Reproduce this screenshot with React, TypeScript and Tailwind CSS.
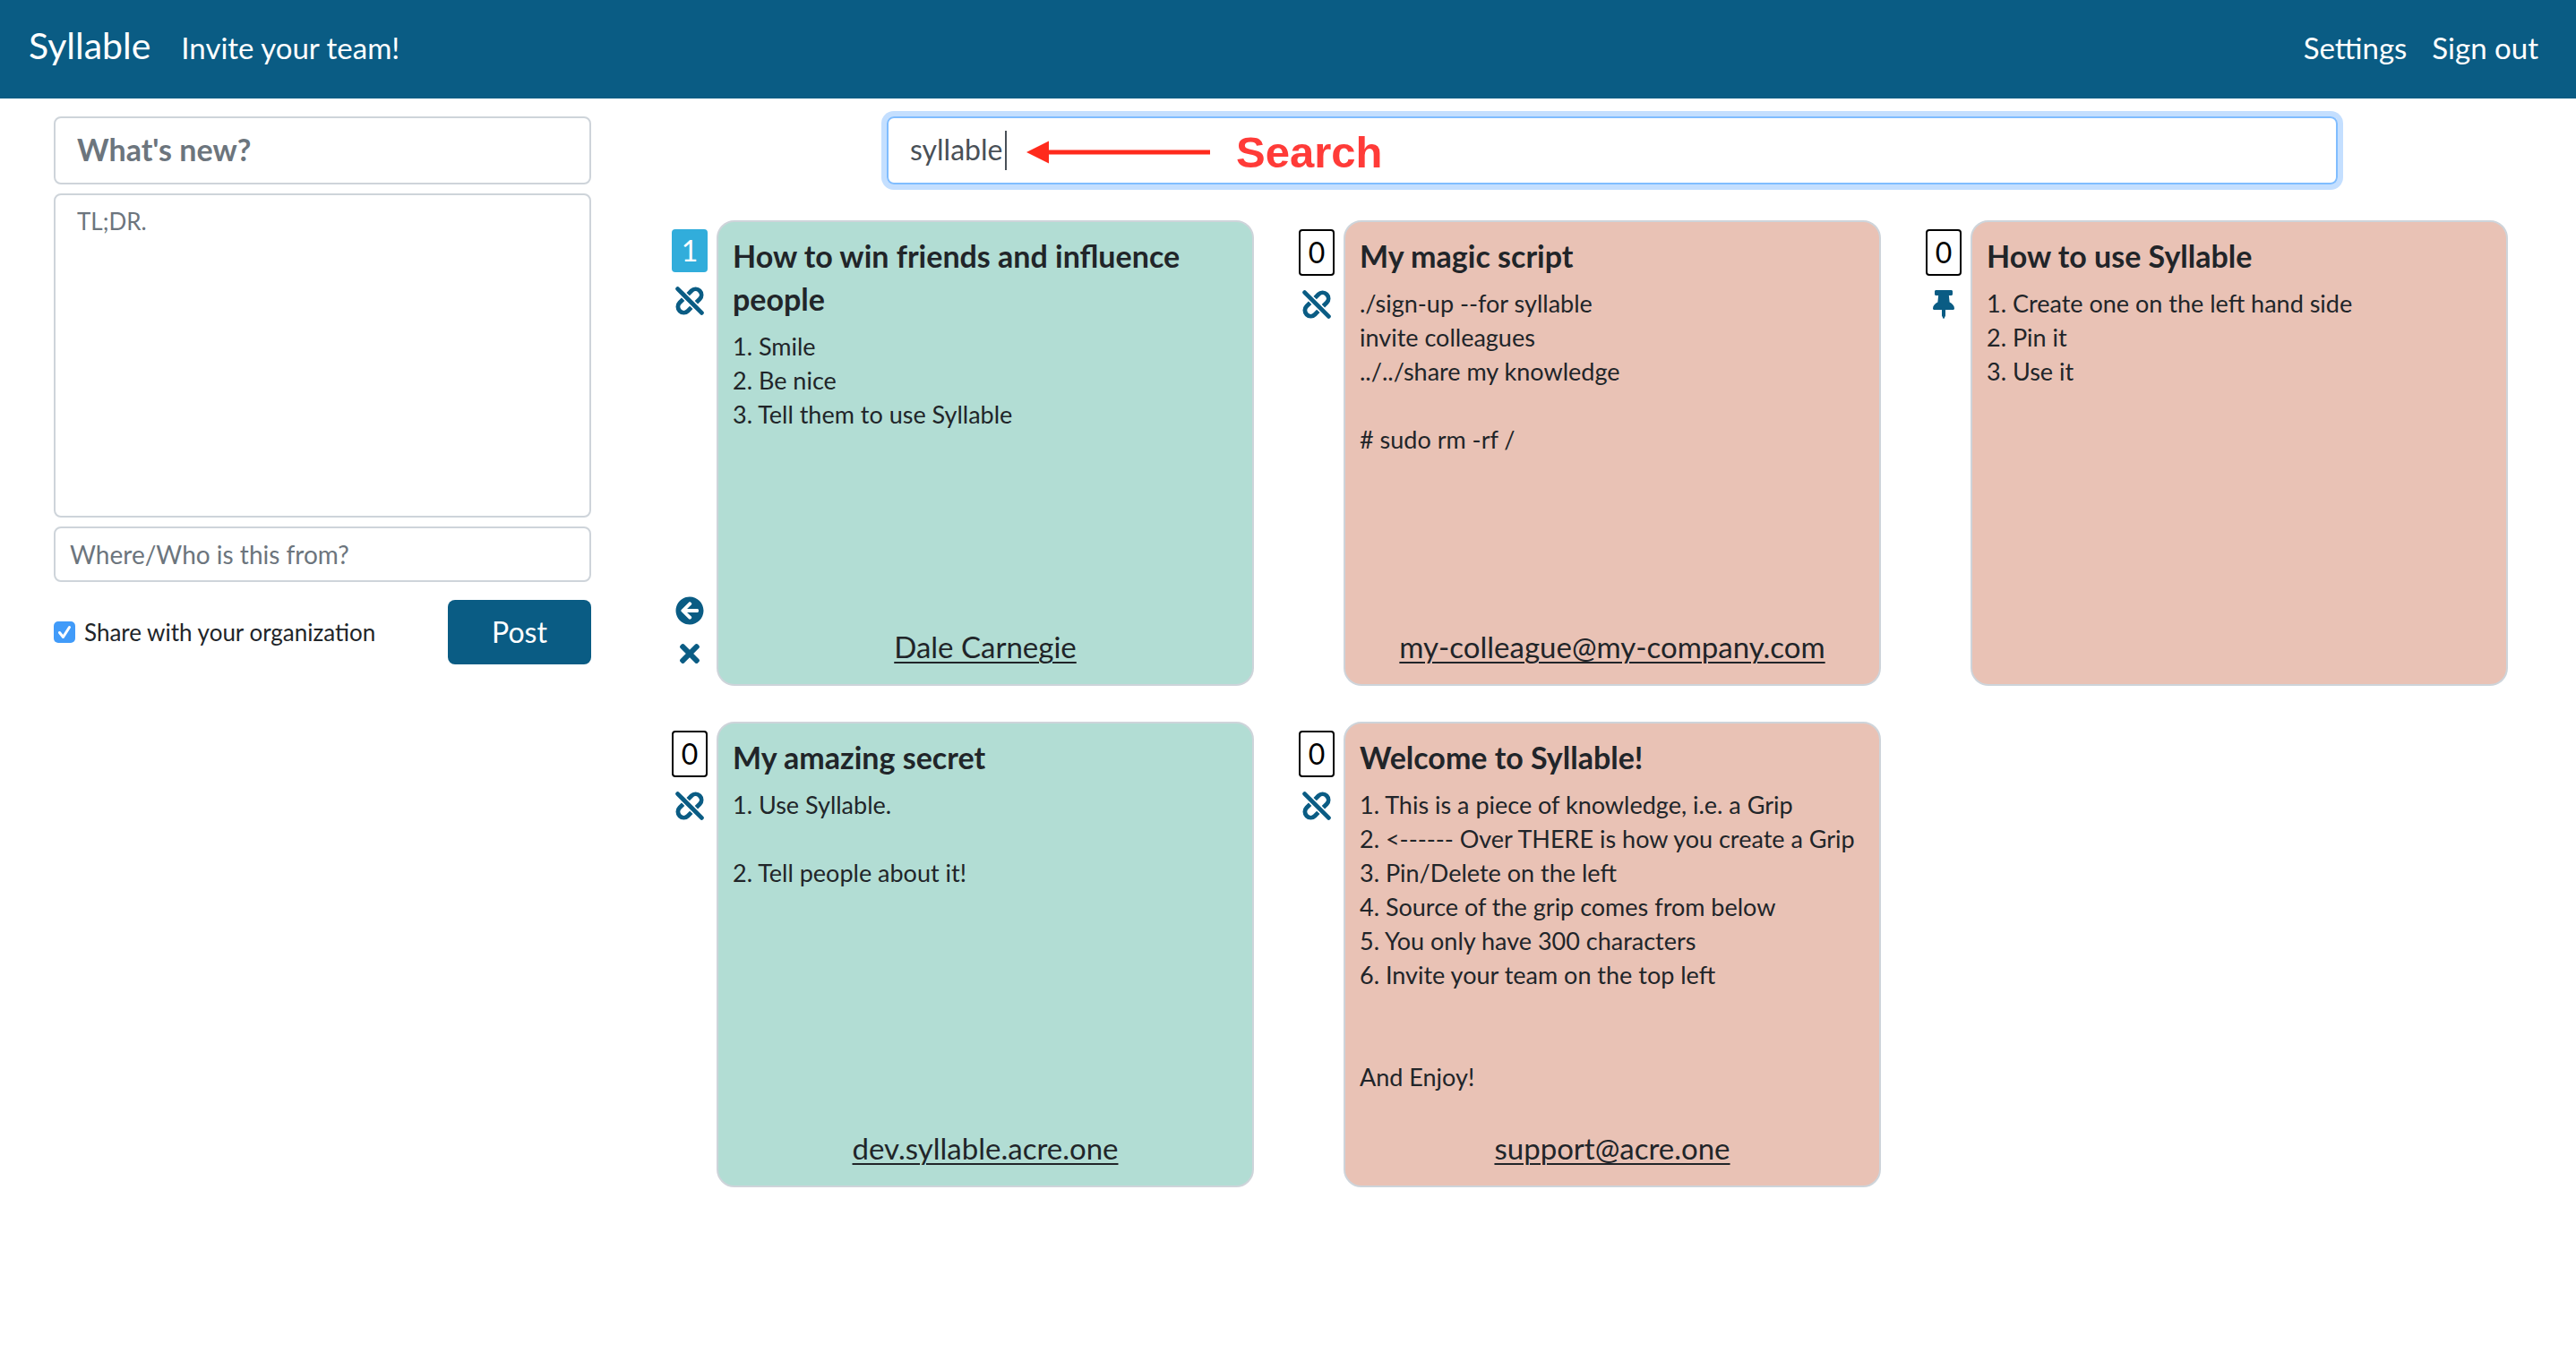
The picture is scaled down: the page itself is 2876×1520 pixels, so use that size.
import { FaArrowCircleLeft, FaThumbtack, FaTimes } from "react-icons/fa";

type Grip = {
  title: string;
  body: string;
  source?: string;
  count: number;
  mine: boolean;
  pinned?: boolean;
  editable?: boolean;
};

const grips: Grip[] = [
  {
    title: "How to win friends and influence people",
    body: "1. Smile\n2. Be nice\n3. Tell them to use Syllable",
    source: "Dale Carnegie",
    count: 1,
    mine: true,
    editable: true,
  },
  {
    title: "My magic script",
    body: "./sign-up --for syllable\ninvite colleagues\n../../share my knowledge\n\n# sudo rm -rf /",
    source: "my-colleague@my-company.com",
    count: 0,
    mine: false,
  },
  {
    title: "How to use Syllable",
    body: "1. Create one on the left hand side\n2. Pin it\n3. Use it",
    count: 0,
    mine: false,
    pinned: true,
  },
  {
    title: "My amazing secret",
    body: "1. Use Syllable.\n\n2. Tell people about it!",
    source: "dev.syllable.acre.one",
    count: 0,
    mine: true,
  },
  {
    title: "Welcome to Syllable!",
    body: "1. This is a piece of knowledge, i.e. a Grip\n2. <------ Over THERE is how you create a Grip\n3. Pin/Delete on the left\n4. Source of the grip comes from below\n5. You only have 300 characters\n6. Invite your team on the top left\n\n\nAnd Enjoy!",
    source: "support@acre.one",
    count: 0,
    mine: false,
  },
];

function UnlinkIcon() {
  return (
    <svg viewBox="0 0 32 32" className="size-8" fill="none" stroke="currentColor" strokeWidth="4.8" aria-hidden="true">
      <path d="M2.6 2.6 29.4 29.4" strokeLinecap="round" />
      <path d="M14.2 8.6 18 4.8A6.5 6.5 0 0 1 27.2 14L23.4 17.8" />
      <path d="M17.8 23.4 14 27.2A6.5 6.5 0 0 1 4.8 18L8.6 14.2" />
    </svg>
  );
}

function NavBar() {
  return (
    <nav className="flex items-baseline justify-between bg-[#0a5c84] pt-[21px] pr-[42px] pb-[27px] pl-8 text-[33px] leading-[60px] text-white">
      <div className="flex items-baseline gap-[34px]">
        <a href="#home" className="text-[41px]">Syllable</a>
        <a href="#invite">Invite your team!</a>
      </div>
      <div className="flex items-baseline gap-7">
        <a href="#settings">Settings</a>
        <a href="#sign-out">Sign out</a>
      </div>
    </nav>
  );
}

function PostForm() {
  return (
    <form className="flex flex-col gap-[10px]" onSubmit={(e) => e.preventDefault()}>
      <input
        aria-label="Title"
        placeholder="What's new?"
        className="w-full rounded-lg border-2 border-[#ced4da] px-6 pt-[11px] pb-[13px] text-[34px] leading-[48px] font-bold outline-none placeholder:text-[#6c757d]"
      />
      <textarea
        aria-label="Body"
        placeholder="TL;DR."
        rows={9}
        className="block w-full resize-none rounded-lg border-2 border-[#ced4da] px-6 pt-[10px] pb-[6px] text-[26px] leading-[38px] outline-none placeholder:text-[#6c757d]"
      />
      <input
        aria-label="Source"
        placeholder="Where/Who is this from?"
        className="w-full rounded-lg border-2 border-[#ced4da] px-4 py-2 text-[28px] leading-[42px] outline-none placeholder:text-[#6c757d]"
      />
      <div className="mt-[10px] flex items-center justify-between">
        <label className="flex items-center gap-[10px] text-[26px] leading-[38px]">
          <span className="grid size-6">
            <input
              type="checkbox"
              defaultChecked
              className="col-start-1 row-start-1 size-6 appearance-none rounded-[5px] bg-[#419bf9]"
            />
            <svg
              viewBox="0 0 24 24"
              className="pointer-events-none col-start-1 row-start-1 size-6"
              fill="none"
              stroke="white"
              strokeWidth="3"
              strokeLinecap="round"
              strokeLinejoin="round"
              aria-hidden="true"
            >
              <path d="M6.5 12.5 10.5 17.5 17.5 6.5" />
            </svg>
          </span>
          Share with your organization
        </label>
        <button type="submit" className="w-40 rounded-lg bg-[#0a5c84] py-3 text-[32px] leading-[48px] text-white">
          Post
        </button>
      </div>
    </form>
  );
}

function SearchBox() {
  return (
    <div className="relative mx-[240px]">
      <input
        type="text"
        aria-label="Search"
        defaultValue="syllable"
        className="block w-full rounded-lg border-2 border-[#80bdff] px-6 pt-[11px] pb-[13px] text-[32px] leading-[48px] text-[#495057] ring-[6px] ring-[#c4dfff] outline-none"
      />
      <div className="pointer-events-none absolute inset-y-0 left-0 flex items-center pl-[132px]">
        <span className="h-11 w-[2px] bg-[#495057]" />
        <svg viewBox="0 0 206 26" className="mt-1 ml-[22px] h-[26px] w-[206px]" aria-hidden="true">
          <path d="M0 13 25 0.500V25.500Z" fill="#ff2a1c" />
          <path d="M24 13H205" stroke="#ff2a1c" strokeWidth="5" />
        </svg>
        <span className="mt-1 ml-7 font-['Liberation_Sans',Arial,sans-serif] text-[49px] leading-[56px] font-bold text-[#ff3b38]">
          Search
        </span>
      </div>
    </div>
  );
}

function GripCard({ grip }: { grip: Grip }) {
  return (
    <article className="flex gap-[10px] pr-[50px]">
      <div className="flex w-10 flex-col items-center gap-4 pt-[10px] pb-5 text-[#0a5c84]">
        {grip.count > 0 ? (
          <button className="w-full rounded bg-[#31addb] text-[32px] leading-[48px] text-white">{grip.count}</button>
        ) : (
          <button className="w-full rounded border-2 border-black text-[32px] leading-[48px] text-black">
            {grip.count}
          </button>
        )}
        <button aria-label={grip.pinned ? "Unpin" : "Pin"}>
          {grip.pinned ? <FaThumbtack size={32} /> : <UnlinkIcon />}
        </button>
        {grip.editable && (
          <>
            <button aria-label="Move back" className="mt-auto">
              <FaArrowCircleLeft size={32} />
            </button>
            <button aria-label="Delete">
              <FaTimes size={32} />
            </button>
          </>
        )}
      </div>
      <div
        className={
          "flex min-h-[520px] flex-1 flex-col rounded-[20px] border-2 border-[#ced4da] px-4 pt-[14px] pb-[18px] " +
          (grip.mine ? "bg-[#b2ddd4]" : "bg-[#e9c2b5]")
        }
      >
        <h2 className="text-[34px] leading-[48px] font-bold">{grip.title}</h2>
        <p className="mt-[10px] text-[27px] leading-[38px] whitespace-pre-wrap">{grip.body}</p>
        {grip.source && (
          <a href="#source" className="mt-auto self-center text-[33px] leading-[48px] underline decoration-2 underline-offset-4">
            {grip.source}
          </a>
        )}
      </div>
    </article>
  );
}

export default function App() {
  return (
    <div className="min-h-screen bg-white font-[Lato,sans-serif] text-[#212529]">
      <NavBar />
      <div className="flex pt-5">
        <aside className="w-1/4 pr-[59px] pl-[60px]">
          <PostForm />
        </aside>
        <main className="flex-1 pr-[26px] pl-[31px]">
          <SearchBox />
          <section className="mt-10 grid grid-cols-3 gap-y-10">
            {grips.map((grip) => (
              <GripCard key={grip.title} grip={grip} />
            ))}
          </section>
        </main>
      </div>
    </div>
  );
}
